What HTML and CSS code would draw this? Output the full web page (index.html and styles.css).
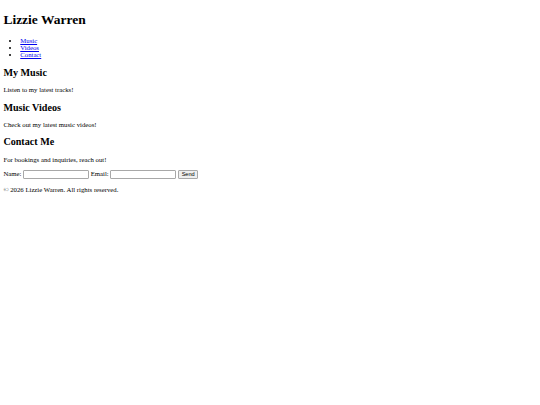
FILE: index.html
```html
<!DOCTYPE html>
<html lang="en">
<head>
<meta charset="utf-8">
<title>Lizzie Warren</title>
<link rel="stylesheet" href="styles.css">
</head>
<body class="page">
<header>
<h1 class="title">Lizzie Warren</h1>
<nav>
<ul class="menu">
<li><a href="#music">Music</a></li>
<li><a href="#videos">Videos</a></li>
<li><a href="#contact">Contact</a></li>
</ul>
</nav>
</header>
<main>
<section id="music">
<h2 class="heading">My Music</h2>
<p class="text">Listen to my latest tracks!</p>
</section>
<section id="videos">
<h2 class="heading">Music Videos</h2>
<p class="text">Check out my latest music videos!</p>
</section>
<section id="contact">
<h2 class="heading">Contact Me</h2>
<p class="text">For bookings and inquiries, reach out!</p>
<form class="form">
<label>Name: <input type="text" class="field"></label>
<label>Email: <input type="email" class="field"></label>
<button type="submit" class="btn">Send</button>
</form>
</section>
</main>
<footer>
<p class="text">© 2026 Lizzie Warren. All rights reserved.</p>
</footer>
</body>
</html>
```

FILE: styles.css
```css
html {
  background: #fff;
}
.page {
  margin: 3.375px;
  font-family: "Liberation Serif", "Times New Roman", serif;
  font-size: 6.75px;
  color: #000;
}
.title {
  font-size: 13.5px;
  margin: 9.05px 0;
  font-weight: bold;
}
.menu {
  margin: 6.75px 0;
  padding-left: 16.875px;
  list-style: disc;
}
.menu a {
  color: #0000ee;
}
.heading {
  font-size: 10.125px;
  margin: 8.4px 0;
  font-weight: bold;
}
.text {
  margin: 6.75px 0;
}
.form {
  margin: 0;
}
.field {
  box-sizing: border-box;
  width: 66px;
  height: 9px;
  margin: 0;
  padding: 0 1px;
  font-family: "Liberation Sans", Arial, sans-serif;
  font-size: 5.6px;
  border: 1px solid #a8a8a8;
  border-radius: 1px;
  background: #fff;
  vertical-align: baseline;
}
.btn {
  box-sizing: border-box;
  height: 9px;
  margin: 0;
  padding: 0 2.5px;
  font-family: "Liberation Sans", Arial, sans-serif;
  font-size: 5.6px;
  line-height: 1;
  color: #000;
  background: #efefef;
  border: 1px solid #a8a8a8;
  border-radius: 1px;
}
```
